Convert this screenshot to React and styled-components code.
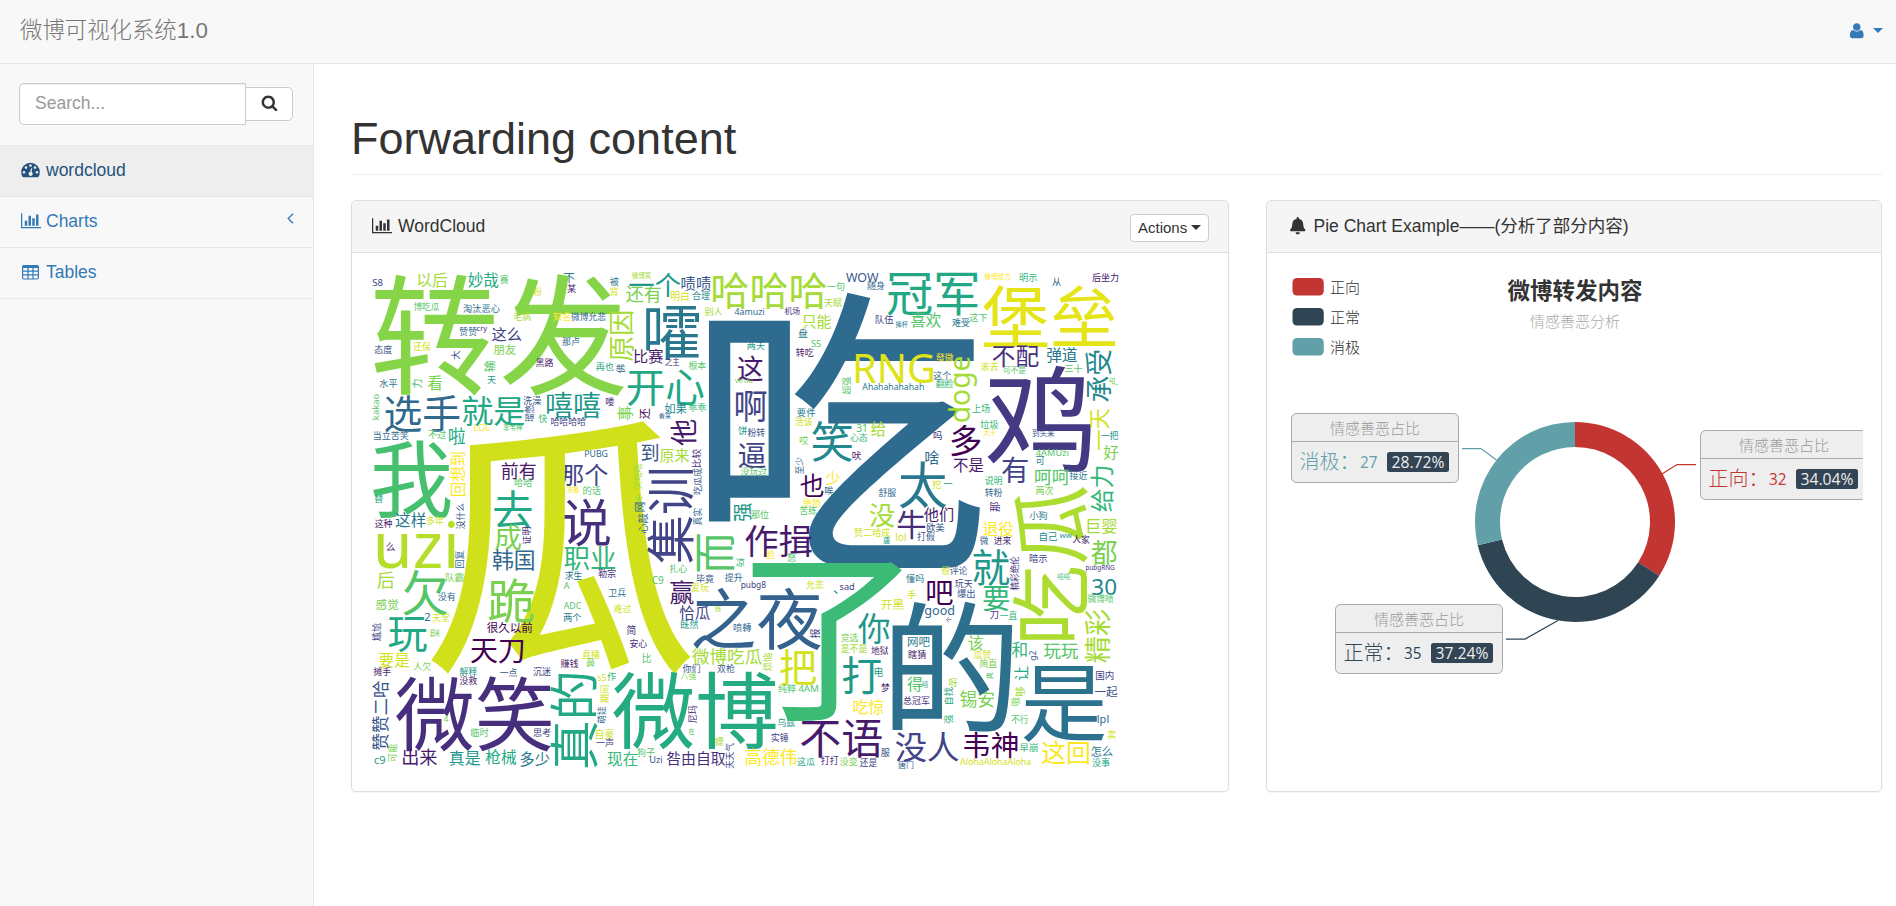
import React from "react";
import styled, { createGlobalStyle } from "styled-components";
import { FaBell } from "react-icons/fa";

const GlobalStyle = createGlobalStyle`
  * { box-sizing: border-box; }
  body {
    margin: 0;
    background: #fff;
    color: #333;
    font: 17.5px/25px "Liberation Sans", "Noto Sans CJK SC", sans-serif;
  }
`;

const Navbar = styled.header`
  display: flex;
  align-items: center;
  justify-content: space-between;
  height: 64px;
  padding: 0 13px 2px 20px;
  background: #f8f8f8;
  border-bottom: 1px solid #e7e7e7;
`;
const Brand = styled.div`
  font-size: 22.4px;
  font-weight: 300;
  color: #777;
`;
const UserMenu = styled.div`
  display: flex;
  align-items: center;
  gap: 8px;
  color: #337ab7;
`;
const Caret = styled.span`
  border: ${(p) => p.$size}px solid transparent;
  border-top-color: currentColor;
  border-bottom: 0;
`;
const Shell = styled.div`
  display: flex;
  height: 842px;
`;
const Sidebar = styled.nav`
  width: 314px;
  flex: none;
  background: #f8f8f8;
  border-right: 1px solid #e7e7e7;
`;
const SearchRow = styled.div`
  display: flex;
  align-items: center;
  height: 82px;
  padding: 0 19px 1px;
  border-bottom: 1px solid #e7e7e7;
`;
const SearchInput = styled.input`
  width: 227px;
  height: 42px;
  padding: 0 15px 2px;
  font: inherit;
  background: #fff;
  border: 1px solid #ccc;
  border-radius: 5px 0 0 5px;
  box-shadow: inset 0 1px 1px rgba(0, 0, 0, 0.075);
  &::placeholder { color: #999; opacity: 1; }
`;
const SearchButton = styled.button`
  display: flex;
  align-items: center;
  justify-content: center;
  width: 48px;
  height: 34px;
  margin-left: -1px;
  padding: 0 0 3px;
  color: #333;
  background: #fff;
  border: 1px solid #ccc;
  border-radius: 0 5px 5px 0;
`;
const NavItem = styled.a`
  display: flex;
  align-items: center;
  height: 51px;
  padding: 0 19px 2px 20px;
  color: ${(p) => (p.$active ? "#23527c" : "#337ab7")};
  background: ${(p) => (p.$active ? "#eee" : "transparent")};
  border-bottom: 1px solid #e7e7e7;
`;
const NavIcon = styled.span`
  display: flex;
  justify-content: center;
  width: 21px;
  margin-right: 5px;
`;
const Arrow = styled.svg`
  margin: 0 0 6px auto;
`;
const Main = styled.main`
  flex: 1;
  min-width: 0;
  padding: 50px 14px 0 37px;
`;
const Title = styled.h1`
  height: 61px;
  margin: 0 0 25px;
  font-size: 45px;
  font-weight: 400;
  line-height: 50px;
  border-bottom: 1px solid #eee;
`;
const Panels = styled.div`
  display: flex;
  gap: 37px;
`;
const Panel = styled.section`
  width: ${(p) => p.$width}px;
  height: 592px;
  border: 1px solid #ddd;
  border-radius: 5px;
  box-shadow: 0 1px 1px rgba(0, 0, 0, 0.05);
`;
const PanelHead = styled.div`
  display: flex;
  align-items: center;
  gap: ${(p) => p.$gap || 6}px;
  height: 52px;
  padding: 0 19px 1px ${(p) => p.$indent || 20}px;
  background: #f5f5f5;
  border-bottom: 1px solid #ddd;
  border-radius: 4px 4px 0 0;
`;
const PanelBody = styled.div`
  padding: 15px 0 15px ${(p) => p.$indent}px;
`;
const ActionsButton = styled.button`
  display: flex;
  align-items: center;
  gap: 4px;
  width: 79px;
  height: 28px;
  margin: 3px 0 0 auto;
  padding: 0 6px 1px 7px;
  font: 15px "Liberation Sans", sans-serif;
  color: #333;
  background: #fff;
  border: 1px solid #ccc;
  border-radius: 4px;
`;
const Drawing = styled.svg`
  display: block;
`;
const CloudText = styled.text`
  font-family: "Noto Sans", "Noto Sans CJK SC", sans-serif;
`;
const ChartText = styled.text`
  font-family: "Open Sans", "Noto Sans CJK SC", sans-serif;
  font-weight: ${(p) => p.$weight || 300};
`;

const PATHS = {
  user: "M1600 1405q0 120-73 189.5t-194 69.5h-874q-121 0-194-69.5t-73-189.5q0-53 3.5-103.5t14-109 26.5-108.5 43-97.5 62-81 85.5-53.5 111.5-20q9 0 42 21.5t74.5 48 108 48 133.5 21.5 133.5-21.5 108-48 74.5-48 42-21.5q61 0 111.5 20t85.5 53.5 62 81 43 97.5 26.5 108.5 14 109 3.5 103.5zm-320-893q0 159-112.5 271.5t-271.5 112.5-271.5-112.5-112.5-271.5 112.5-271.5 271.5-112.5 271.5 112.5 112.5 271.5z",
  search: "M1216 832q0-185-131.5-316.5t-316.5-131.5-316.5 131.5-131.5 316.5 131.5 316.5 316.5 131.5 316.5-131.5 131.5-316.5zm512 832q0 52-38 90t-90 38q-54 0-90-38l-343-342q-179 124-399 124-143 0-273.5-55.5t-225-150-150-225-55.5-273.5 55.5-273.5 150-225 225-150 273.5-55.5 273.5 55.5 225 150 150 225 55.5 273.5q0 220-124 399l343 343q37 37 37 90z",
  bars: "M640 896v512h-256v-512h256zm384-512v1024h-256v-1024h256zm1024 1152v128h-2048v-1536h128v1408h1920zm-640-896v768h-256v-768h256zm384-384v1152h-256v-1152h256z",
};
const Glyph = ({ name, w = 17.5, box = "0 0 1792 1792" }) => (
  <svg width={w} height={17.5} viewBox={box} fill="currentColor"><path d={PATHS[name]} /></svg>
);
const BarsIcon = () => <Glyph name="bars" w={20} box="0 0 2048 1792" />;
const GaugeIcon = () => (
  <svg width="19" height="16" viewBox="0 0 19 16">
    <path fill="currentColor" d="M.2 10A9.2 9.2 0 0 1 18.800 10Q18.800 12.800 17.500 14.800Q17.200 15.200 16.700 15.200H2.300Q1.800 15.200 1.500 14.800Q.2 12.800 .2 10Z" />
    <g fill="#eee">
      <circle cx="3" cy="10.200" r="1.300" /><circle cx="5" cy="5.600" r="1.300" />
      <circle cx="9.500" cy="3.600" r="1.300" /><circle cx="14" cy="5.600" r="1.300" />
      <circle cx="16" cy="10.200" r="1.300" />
      <path d="M10.100 6.200L11.300 6.500L10.600 10A2.100 2.100 0 1 1 9.200 9.800Z" />
    </g>
  </svg>
);
const TableIcon = () => (
  <svg width="17" height="15" viewBox="0 0 17 15" fill="none" stroke="currentColor">
    <rect x=".6" y=".6" width="15.800" height="13.400" rx="1.200" strokeWidth="1.200" />
    <path d="M1 2H16" strokeWidth="2" />
    <path d="M1 6.100H16M1 9.900H16M6 2V14M11 2V14" strokeWidth="1.200" />
  </svg>
);

const SHADES = ["#440154", "#481a6c", "#472f7d", "#414487", "#39568c", "#31688e", "#2a788e", "#23888e", "#1f988b", "#22a884", "#35b779", "#54c568", "#7ad151", "#a5db36", "#d2e21b", "#fde725"];

/* Each line: word, start, end, cross-axis centre, shade (index or colour).
   h words run left to right, v words run bottom to top. Units are thirds of a pixel. */
const SECTORS = [
  { x: 0, y: 0,
    h: `S8 23 52 54 3|以后 158 246 46 13|妙哉 310 400 46 9|赛 405 430 43 11|不 596 628 40 6|某 607 633 69 1|被 735 761 50 6|背 735 760 80 14|脱粉 478 530 80 14|转发 27 777 208 #86d549|博吃瓜 146 223 126 11|淘汰 295 348 132 5|恶心 351 404 132 6|毛病 446 498 155 13|知名 565 616 155 15|微博允悲 618 722 155 5|赞赞 284 335 200 5|cry 336 366 196 2|这么 381 469 208 3|那卢 592 643 230 5|态度 29 81 253 4|还保 145 197 245 14|朋友 386 452 254 12|黑路 513 565 293 1|再也 693 745 305 9|水平 44 96 357 6|看 188 231 354 12|天 367 392 346 8|选手 60 283 445 5|就是 293 478 436 9|洗澡 475 528 406 4|嘻嘻 546 705 422 8|喽 723 748 410 2|快 521 546 462 10|哈哈哈哈 558 662 470 3|LOL 328 375 488 15|李韦神 415 471 487 11|当立苦笑 26 130 512 5|不过 191 243 508 11|啦 252 300 513 9|我 24 256 645 #46c06f|前有 410 512 619 1|那个 588 728 630 3|PUBG 660 727 567 5|哈哈 449 501 654 11|准备 606 643 675 15|的话 655 707 676 11|去 388 500 732 9|替 28 54 700 9|这样 92 182 765 6|说 595 735 772 2|瓜 197 978 850 #d0e11c`,
    v: `佛 298 324 767 5|大 257 283 272 4|输 287 320 373 11|力 343 369 156 10|kakao 388 463 32 11|瑠憋 420 470 493 4|回想到 562 693 279 15|没什么 715 792 286 4` },
  { x: 250, y: 0,
    h: `微博笑 51 108 33 13|一个 43 196 60 8|还有 33 137 86 12|啧啧 200 287 55 4|哈哈哈 294 634 77 13|明白 168 220 94 14|合理 232 284 91 7|嚯 93 253 203 6|别人 269 322 139 13|4amuzi 359 447 140 5|机场 509 554 137 2|一句 636 688 65 11|天赋 628 681 113 13|只能 562 648 169 13|盘 551 577 204 6|S5 589 617 237 11|转吃 543 595 264 1|WOW 693 790 39 4|比赛 58 144 274 1|之主 150 193 292 2|根本 221 273 301 11|开心 38 266 367 9|如果 149 215 431 7|乖乖 221 272 428 10|看来 132 168 452 5|两天 397 449 243 8|这 368 443 310 1|viruu 360 412 347 12|啊 363 454 425 3|饼 370 396 496 8|粉转 398 449 503 4|逼 371 451 570 3|没玩过 377 456 620 11|那位 409 461 750 11|到 80 129 564 4|原来 135 222 570 13|也 556 625 660 0|少 632 674 640 15|唉 630 655 675 5|绝地 565 617 711 15|苦练 554 606 736 11|要件 547 600 443 6|活该 540 592 469 14|哎 554 580 525 12|笑 591 710 530 7|31 725 752 491 11|心态 706 757 518 10|吠 712 738 571 1|吃 281 1098 494 #2f6b8e|RNG 722 954 312 #dde318|Ahahahahahah 742 926 365 6|火 60 85 700 12`,
    v: `原因 140 288 20 13|事 424 466 30 12|笑嘻嘻 597 672 68 13|强 715 768 385 8|超强 337 388 695 11|还 430 462 89 0|他 464 542 205 1|比较 553 607 245 2|吃瓜成 610 688 248 4|至少 577 627 555 5|网 713 740 76 5|心敲 745 805 84 5|真实 730 780 248 5|集训 615 893 166 3` },
  { x: 500, y: 0,
    h: `随身 8 58 63 5|冠军 67 337 86 9|微博给力 358 436 33 15|明示 464 516 38 10|从 562 588 50 5|后坐力 682 760 38 1|堡垒 355 751 152 #e5e419|队伍 32 85 162 3|捧杯 92 129 179 6|喜欢 138 228 164 11|难受 262 314 173 6|这下 314 366 158 11|發微 213 265 278 15|这个 206 258 331 5|翻脸 213 265 357 10|滚去 347 400 305 14|可不是 415 482 317 11|不配 383 520 275 2|弹道 546 636 269 6|三十 600 651 312 11|上场 322 374 432 10|垃圾 347 400 477 10|大于 356 393 503 15|到头来 502 568 504 4|吗 206 231 511 2|鸡 366 678 462 #443983|一把 708 760 511 8|好 717 760 562 12|4AMUzi 513 610 562 11|可 513 538 587 7|有 411 488 615 3|多 258 346 527 0|不是 266 355 600 1|啥 181 222 577 5|给 18 62 492 13|太 104 243 660 6|挖 203 229 657 14|一 236 262 654 8|呵呵 511 612 640 11|接近 614 667 631 6|说明 360 411 646 10|转粉 360 411 684 5|两次 513 565 676 12|舒服 41 93 684 5|没 14 88 752 13|牛 98 180 777 2|他们 177 264 748 1|小狗 494 546 751 6`,
    v: `doge 276 470 293 13|承受 255 410 700 7|卢 337 362 745 12|一天 432 555 705 14|给力 605 740 710 10|那 711 740 390 2|吃瓜 665 1125 557 #addc30` },
  { x: 0, y: 250,
    h: `这种 30 81 27 1|多年 185 236 18 14|uzi 38 270 90 #b5de2b|么 64 90 98 1|成 391 468 68 12|韩国 383 506 134 5|跪 372 507 255 12|职业 598 750 128 10|求生 600 651 181 6|勒宗 700 752 174 2|后 37 87 197 13|欠 115 246 232 11|队霸 243 295 188 12|没有 219 271 244 5|感觉 33 100 268 12|2 179 195 307 5|天堂 202 254 307 14|玩 71 185 357 9|很久以前 366 502 338 0|A 596 613 213 11|ADC 596 648 273 11|两个 596 648 308 6|卫兵 731 782 234 6|难过 746 798 282 14|要是 43 133 435 14|人欠 146 198 454 12|天刀 318 475 410 0|解释 284 336 471 8|一点 405 456 474 4|没救 284 336 496 1|沉迷 505 557 470 3|直播 652 704 418 14|赚钱 587 640 447 1|鼻 664 689 442 12|摊手 26 77 470 1|微笑 93 557 595 2|4 236 250 611 12|临时 318 370 651 11|思考 505 557 651 3|s5 698 723 490 14|作 727 752 486 10|自豪 694 746 658 14|一声 694 746 683 3|出来 114 216 727 1|真是 254 345 729 8|枪械 362 453 725 9|多少 466 553 732 6|现在 728 817 733 10|c9 29 60 736 8`,
    v: `证明 36 88 484 2|回复 107 159 284 5|尴尬 325 377 35 3|望 342 366 208 12|赞赞二哈 498 705 45 4|真的 477 757 626 9|期间 512 564 718 14|萌娃 575 625 711 5|可能 688 740 84 12` },
  { x: 250, y: 250,
    h: `作揖 391 590 77 1|扎心 164 216 162 11|凉 363 388 143 10|脸 454 480 118 15|怒 517 543 127 11|C9 112 145 195 11|毕竟 244 296 191 4|提升 330 382 187 5|赢 165 235 231 1|爱玩 229 281 217 14|pubg8 379 452 211 3|允悲 574 626 210 14|sad 675 717 214 3|、 656 668 232 7|恰瓜 194 284 294 3|既然 197 250 327 8|贱 300 318 282 13|之夜 235 617 310 #34618d|喷轉 356 408 339 5|简 36 62 346 2|安心 45 96 387 2|比 83 108 429 11|微博吃瓜 232 440 423 13|你们 203 255 462 4|双枪 307 359 462 4|八强 198 243 485 12|微博 -5 482 587 #25ab82|把 496 603 458 14|纯粹 490 542 521 11|4AM 550 609 521 11|竞选 678 730 368 12|是不是 678 756 402 13|你 730 823 342 8|打 683 797 480 8|乌兹 488 540 623 8|实锤 469 520 668 3|嫖 300 325 680 13|在 221 238 649 11|不语 558 800 670 1|吃惊 716 805 575 15|狗子 67 119 713 11|Uzi 105 141 735 4|咎由自取 155 331 730 2|高德伟 391 545 727 15|这瓜 547 599 739 9|打打 618 670 736 2|没变 675 727 739 12|还是 735 786 743 3|赞二哈成 718 825 53 14|了 412 862 380 #3bbb75`,
    v: `而 57 170 302 11|烦恼 415 468 458 13|报 342 370 600 3|尼玛 572 623 233 2|天天气 685 760 345 3` },
  { x: 500, y: 250,
    h: `退役 355 445 41 15|巨婴 668 755 33 13|微 345 370 76 5|进来 387 438 76 1|欧美 186 238 36 4|打假 157 209 65 4|唐 55 75 76 8|lol 93 122 67 14|自己 525 577 65 7|ww 584 621 62 8|人家 623 674 75 1|都 679 755 115 12|pubgRNG 663 748 161 2|30 682 753 215 7|微博啧 668 745 252 11|暗示 494 546 131 3|嘻嘻 578 615 184 10|就 325 433 156 8|要 355 432 252 10|很 229 254 168 14|评论 255 307 167 4|懂吗 124 176 192 6|吧 187 263 233 0|玩天 270 322 207 3|爆出 277 329 234 4|手 128 153 237 14|开黑 49 116 270 14|good 180 267 290 5|刀 375 400 301 2|一直 405 456 301 10|网吧 129 194 382 6|瞎猜 131 183 417 1|该 310 353 384 12|瓜赞 326 378 420 14|简直 344 396 446 12|得 127 172 506 11|嘻 172 190 507 8|总冠军 115 193 556 2|锡安 285 387 554 12|的 82 442 456 #2d708e|和 441 485 403 10|玩玩 537 639 407 11|地狱 19 70 406 1|电 29 54 472 8|梦 49 74 518 1|国内 693 745 481 3|一起 690 757 530 4|是 475 718 567 #2c718e|不行 439 490 615 11|lpl 698 730 616 5|卖 728 753 657 14|没人 92 280 695 3|韦神 298 457 691 0|早崩 465 517 697 10|这回 531 672 713 15|怎么 678 743 711 6|没事 682 734 744 9|AlohaAlohaAloha 285 497 740 14|服 48 74 713 4|唐门 100 145 749 5|呀 252 276 503 13`,
    v: `个 305 322 250 3|精彩绝伦 124 226 448 2|g2 408 436 508 4|让 454 495 470 9|够 515 545 466 13|爽 472 492 374 11|自找 517 567 250 9|强 600 625 252 10|嗷 548 572 453 12|精彩 283 443 699 13` },
];

let pen;
const inkOf = (word) => {
  pen = pen || document.createElement("canvas").getContext("2d");
  pen.font = '200px "Noto Sans", "Noto Sans CJK SC", sans-serif';
  const m = pen.measureText(word);
  return {
    width: (m.actualBoundingBoxLeft + m.actualBoundingBoxRight) / 200,
    midX: (m.actualBoundingBoxRight - m.actualBoundingBoxLeft) / 400,
    midY: (m.actualBoundingBoxDescent - m.actualBoundingBoxAscent) / 400,
  };
};
const Word = ({ line, upright }) => {
  const [word, from, to, cross, shade] = line.split(" ");
  const ink = inkOf(word);
  const size = (to - from) / ink.width;
  const mid = (Number(from) + Number(to)) / 2;
  const place = upright ? `translate(${cross} ${mid}) rotate(-90)` : `translate(${mid} ${cross})`;
  return (
    <CloudText transform={place} x={-ink.midX * size} y={-ink.midY * size} fontSize={size} fill={SHADES[shade] || shade}>
      {word}
    </CloudText>
  );
};
const WordCloud = () => (
  <Drawing width="757" height="507" viewBox="2 3 757 507">
    {SECTORS.map((s, i) => (
      <g key={i} transform={`translate(${s.x} ${s.y}) scale(${1 / 3})`}>
        {s.h.split("|").map((line) => <Word key={line} line={line} />)}
        {s.v.split("|").map((line) => <Word key={line} line={line} upright />)}
      </g>
    ))}
  </Drawing>
);

const at = (deg, r) => {
  const a = (deg * Math.PI) / 180;
  return `${291 + r * Math.sin(a)} ${254 - r * Math.cos(a)}`;
};
const Slice = ({ from, to, color }) => (
  <path fill={color} d={`M${at(from, 100)}A100 100 0 0 1 ${at(to, 100)}L${at(to, 75)}A75 75 0 0 0 ${at(from, 75)}Z`} />
);
const Callout = ({ x, y, name, count, share, color }) => (
  <g transform={`translate(${x} ${y})`}>
    <rect x=".5" y=".5" width="167" height="69" rx="5" fill="#eee" stroke="#aaa" />
    <path d="M1 28.500H167" stroke="#aaa" />
    <ChartText x="84" y="20.500" fontSize="15" textAnchor="middle" fill="#999">情感善恶占比</ChartText>
    <ChartText x="8.500" y="56" fontSize="20" fill={color}>{name}：</ChartText>
    <ChartText x="69" y="54.500" fontSize="15.500" $weight={400} fill={color} textLength="17.500" lengthAdjust="spacingAndGlyphs">{count}</ChartText>
    <rect x="96" y="39" width="62" height="20" rx="2.500" fill="#334455" />
    <ChartText x="100.500" y="54.500" fontSize="15.500" $weight={400} fill="#eee" textLength="53" lengthAdjust="spacingAndGlyphs">{share}</ChartText>
  </g>
);
const LEGEND = [["正向", "#c23531"], ["正常", "#2f4554"], ["消极", "#61a0a8"]];
const PieChart = () => (
  <Drawing width="579" height="500" viewBox="0 0 579 500">
    {LEGEND.map(([label, color], i) => (
      <g key={label} transform={`translate(8.500 ${10 + i * 30})`}>
        <rect width="31.250" height="17.500" rx="4.500" fill={color} />
        <ChartText x="37.500" y="14.500" fontSize="15" fill="#333">{label}</ChartText>
      </g>
    ))}
    <ChartText x="291" y="30.500" fontSize="22.500" $weight={700} textAnchor="middle" fill="#333">微博转发内容</ChartText>
    <ChartText x="291" y="59" fontSize="15" textAnchor="middle" fill="#aaa">情感善恶分析</ChartText>
    <Slice from={0} to={122.55} color="#c23531" />
    <Slice from={122.55} to={256.6} color="#2f4554" />
    <Slice from={256.6} to={360} color="#61a0a8" />
    <g fill="none" strokeWidth="1.250">
      <path stroke="#61a0a8" d="M178 180.500H197L212.500 192" />
      <path stroke="#c23531" d="M412 196.500H393L378 206" />
      <path stroke="#2f4554" d="M222 371H241L274 352.500" />
    </g>
    <Callout x={7} y={145} name="消极" count="27" share="28.72%" color="#61a0a8" />
    <Callout x={416} y={162} name="正向" count="32" share="34.04%" color="#c23531" />
    <Callout x={51} y={336} name="正常" count="35" share="37.24%" color="#2f4554" />
  </Drawing>
);

export default function App() {
  return (
    <>
      <GlobalStyle />
      <Navbar>
        <Brand>微博可视化系统1.0</Brand>
        <UserMenu><Glyph name="user" /><Caret $size={5} /></UserMenu>
      </Navbar>
      <Shell>
        <Sidebar>
          <SearchRow>
            <SearchInput placeholder="Search..." />
            <SearchButton><Glyph name="search" w={17} /></SearchButton>
          </SearchRow>
          <NavItem $active><NavIcon><GaugeIcon /></NavIcon>wordcloud</NavItem>
          <NavItem>
            <NavIcon><BarsIcon /></NavIcon>Charts
            <Arrow width="7" height="11" viewBox="0 0 7 11" fill="none" stroke="currentColor" strokeWidth="1.300">
              <path d="M6 .8L1.200 5.500L6 10.200" />
            </Arrow>
          </NavItem>
          <NavItem><NavIcon><TableIcon /></NavIcon>Tables</NavItem>
        </Sidebar>
        <Main>
          <Title>Forwarding content</Title>
          <Panels>
            <Panel $width={878}>
              <PanelHead>
                <BarsIcon />WordCloud
                <ActionsButton>Actions<Caret $size={5} /></ActionsButton>
              </PanelHead>
              <PanelBody $indent={15}><WordCloud /></PanelBody>
            </Panel>
            <Panel $width={616}>
              <PanelHead $indent={22} $gap={7}><FaBell size={17.5} />Pie Chart Example——(分析了部分内容)</PanelHead>
              <PanelBody $indent={17}><PieChart /></PanelBody>
            </Panel>
          </Panels>
        </Main>
      </Shell>
    </>
  );
}
